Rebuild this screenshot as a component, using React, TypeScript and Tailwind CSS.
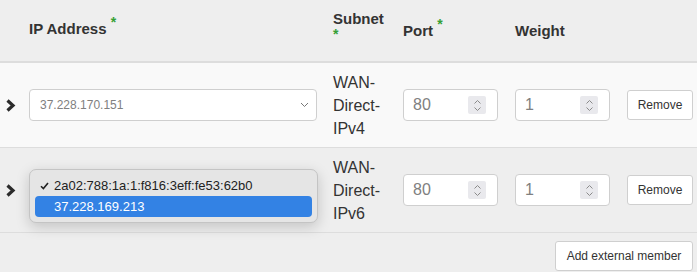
const cols = "grid grid-cols-[21px_304px_70px_112px_112px_1fr]"

type Member = {ip: string; subnet: string[]; port: string; weight: string; open?: boolean}

const members: Member[] = [
  {ip: "37.228.170.151", subnet: ["WAN-", "Direct-", "IPv4"], port: "80", weight: "1"},
  {ip: "", subnet: ["WAN-", "Direct-", "IPv6"], port: "80", weight: "1", open: true},
]

function Star() {
  return <sup className="text-[14px] text-[#35a035]">*</sup>
}

function ChevronRight() {
  return (
    <svg width="11" height="13" viewBox="0 0 11 13" className="block">
      <path d="M2.5 1.5 L8 6.5 L2.5 11.5" fill="none" stroke="#2b2b2b" strokeWidth="3.2" />
    </svg>
  )
}

function Select({value}: {value: string}) {
  return (
    <div className="flex h-[32px] w-[288px] items-center justify-between rounded-[4px] border border-[#cfcfcf] bg-white pl-[10px] pr-[7px] text-[12px] text-[#808080]">
      <span>{value}</span>
      <svg width="9" height="6" viewBox="0 0 9 6">
        <path d="M1 1 L4.5 4.5 L8 1" fill="none" stroke="#777" strokeWidth="1" />
      </svg>
    </div>
  )
}

function NumberInput({value}: {value: string}) {
  return (
    <div className="flex h-[32px] w-[95px] items-center justify-between rounded-[4px] border border-[#cfcfcf] bg-white pl-[9px] pr-[11px] text-[16px] text-[#808080]">
      <span>{value}</span>
      <div className="flex h-[18px] w-[18px] flex-col items-center justify-center gap-[3px] rounded-[2px] bg-[#e9e9ed]">
        <svg width="7" height="4" viewBox="0 0 7 4">
          <path d="M0.5 3.5 L3.5 0.5 L6.5 3.5" fill="none" stroke="#8a8a8a" strokeWidth="1" />
        </svg>
        <svg width="7" height="4" viewBox="0 0 7 4">
          <path d="M0.5 0.5 L3.5 3.5 L6.5 0.5" fill="none" stroke="#8a8a8a" strokeWidth="1" />
        </svg>
      </div>
    </div>
  )
}

function Button({children, className}: {children: React.ReactNode; className?: string}) {
  return (
    <button
      className={`h-[30px] rounded-[3px] border border-[#cfcfcf] bg-white text-[12px] text-[#333] ${className || ""}`}>
      {children}
    </button>
  )
}

function Popup() {
  return (
    <div className="absolute left-0 top-[-5px] z-10 w-[289px] rounded-[7px] border border-[#c4c4c4] bg-[#e5e5e5] px-[5px] py-[5px] text-[13px] shadow-[0_4px_14px_rgba(0,0,0,0.18)]">
      <div className="flex h-[21px] items-center text-[#222]">
        <svg width="9" height="8" viewBox="0 0 9 8" className="ml-[5px] mr-[5px]">
          <path d="M1 4.2 L3.4 6.6 L8 1" fill="none" stroke="#222" strokeWidth="1.6" />
        </svg>
        <span>2a02:788:1a:1:f816:3eff:fe53:62b0</span>
      </div>
      <div className="flex h-[21px] items-center rounded-[4px] bg-[#3382e4] pl-[19px] font-medium text-white">
        37.228.169.213
      </div>
    </div>
  )
}

export default function App() {
  return (
    <div className="min-h-screen w-[697px] bg-[#eeeeee] font-['Liberation_Sans',Arial,sans-serif] text-[#333]">
      {/* Header */}
      <div className={`${cols} h-[63px] items-center border-b-2 border-[#dddddd] bg-[#eeeeee] text-[15px] font-bold leading-[21px]`}>
        <div />
        <div className="px-2 pb-[4px]">
          IP Address <Star />
        </div>
        <div className="self-start px-2 pt-[8px]">
          <div>Subnet</div>
          <div className="h-[10px] text-[14px] leading-[10px] text-[#35a035]">*</div>
        </div>
        <div className="px-2 pb-[1px]">
          Port <Star />
        </div>
        <div className="px-2 pb-[1px]">Weight</div>
        <div />
      </div>

      {/* Rows */}
      {members.map((m, i) => (
        <div
          key={i}
          className={`${cols} items-center border-b border-[#dddddd] ${i === 0 ? "bg-[#f9f9f9]" : "bg-[#eeeeee]"}`}>
          <div className="pl-[5px]">
            <ChevronRight />
          </div>
          <div className="px-2">
            <div className="relative">
              <Select value={m.ip} />
              {m.open && <Popup />}
            </div>
          </div>
          <div className="px-2 pb-[7px] pt-2 text-[16px] leading-[23px] text-[#333]">
            {m.subnet.map((s) => (
              <div key={s}>{s}</div>
            ))}
          </div>
          <div className="px-2">
            <NumberInput value={m.port} />
          </div>
          <div className="px-2">
            <NumberInput value={m.weight} />
          </div>
          <div className="px-2">
            <Button className="w-[66px]">Remove</Button>
          </div>
        </div>
      ))}

      {/* Footer */}
      <div className="flex justify-end pr-[4px] pt-[8px]">
        <Button className="w-[138px]">Add external member</Button>
      </div>
    </div>
  )
}
